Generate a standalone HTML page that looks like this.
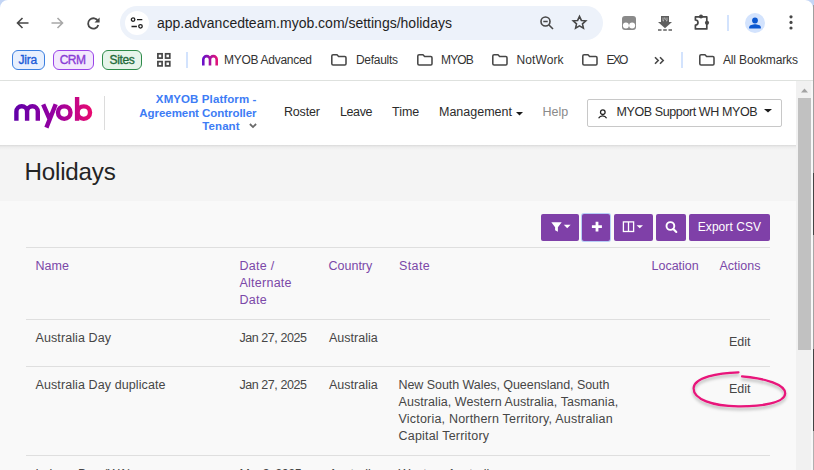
<!DOCTYPE html>
<html><head><meta charset="utf-8">
<style>
*{box-sizing:border-box;margin:0;padding:0}
html,body{width:814px;height:470px;overflow:hidden;background:#fff;font-family:"Liberation Sans",sans-serif}
.a{position:absolute;white-space:nowrap;line-height:1}
svg{position:absolute;overflow:visible}
#chrome{position:absolute;left:0;top:0;width:814px;height:80px;background:#fff}
#url{position:absolute;left:120px;top:6px;width:483px;height:34px;border-radius:17px;background:#edf2fa}
.pill{position:absolute;top:50px;height:20px;border-radius:6px;border:1.5px solid;font-size:12px;line-height:18px;text-align:center;-webkit-text-stroke:0.35px}
.bm{font-size:12px;color:#333;top:54.3px}
#sep{position:absolute;left:0;top:80px;width:813px;height:1px;background:#e0e3e0}
#hdr{position:absolute;left:0;top:81px;width:796px;height:64px;background:#fff;box-shadow:0 0.5px 1px rgba(0,0,0,.13),0 2px 4px rgba(0,0,0,.07)}
#titlebar{position:absolute;left:0;top:145px;width:796px;height:56px;background:#f4f4f4}
#content{position:absolute;left:0;top:201px;width:796px;height:269px;background:#f9f9f9}
.nav{font-size:12.5px;color:#2b2b2b;top:106.4px}
.ten{left:100px;width:156.5px;text-align:right;font-size:11.5px;font-weight:bold;color:#3d7cf5}
.btn{position:absolute;top:214px;height:27px;background:#7f40a8;border-radius:2px}
.th{font-size:12.5px;color:#7b48a8;line-height:17px}
.td{font-size:12.5px;color:#464646;line-height:17px}
.hl{position:absolute;left:26px;width:744px;height:1px;background:#dfdfdf}
</style></head><body>
<div id="chrome"></div>
<!-- window corners -->
<svg style="left:0;top:0" width="8" height="8"><path d="M0 0H8A8 8 0 0 0 0 8Z" fill="#c3d5f5"/></svg>
<svg style="left:805px;top:0" width="9" height="9"><path d="M0 0H9V9H8A8 8 0 0 0 0 0Z" fill="#c3d5f5"/></svg>
<!-- nav icons -->
<svg style="left:15.8px;top:17px" width="13" height="12" viewBox="0 0 13 12"><path d="M12.5 6H1.5M6.5 1L1.5 6L6.5 11" fill="none" stroke="#474747" stroke-width="1.6"/></svg>
<svg style="left:51px;top:17px" width="13" height="12" viewBox="0 0 13 12"><path d="M0.5 6H11.5M6.5 1L11.5 6L6.5 11" fill="none" stroke="#a8a8a8" stroke-width="1.6"/></svg>
<svg style="left:87.1px;top:17px" width="13" height="12" viewBox="0 0 13 12"><path d="M11 4.2A5.2 5.2 0 1 0 11.3 8" fill="none" stroke="#474747" stroke-width="1.8"/><path d="M12.6 0.5V5.6H7.5Z" fill="#474747"/></svg>
<div id="url"></div>
<div style="position:absolute;left:124.8px;top:10.9px;width:24px;height:24px;border-radius:50%;background:#fff"></div>
<svg style="left:130px;top:17px" width="13" height="12" viewBox="0 0 13 12"><circle cx="3.1" cy="2.6" r="1.75" fill="none" stroke="#1f1f1f" stroke-width="1.3"/><path d="M7 2.6H12.3M1.5 9.5H6.9" stroke="#1f1f1f" stroke-width="1.3"/><circle cx="10.5" cy="9.3" r="1.75" fill="none" stroke="#1f1f1f" stroke-width="1.3"/></svg>
<div class="a" style="left:157px;top:15.7px;font-size:14px;color:#1f1f1f">app.advancedteam.myob.com/settings/holidays</div>
<svg style="left:540px;top:16px" width="14" height="14" viewBox="0 0 14 14"><circle cx="5.5" cy="5.5" r="4.5" fill="none" stroke="#474747" stroke-width="1.6"/><path d="M3.3 5.5H7.7M9 9L13 13" stroke="#474747" stroke-width="1.6"/></svg>
<svg style="left:570.5px;top:14.2px" width="17" height="17" viewBox="0 0 24 24"><path d="M12 3.3l2.65 5.75 6.25.6-4.7 4.2 1.35 6.15-5.55-3.2-5.55 3.2 1.35-6.15-4.7-4.2 6.25-.6z" fill="none" stroke="#474747" stroke-width="2.2" stroke-linejoin="miter" stroke-miterlimit="3"/></svg>
<!-- extensions -->
<svg style="left:622px;top:16px" width="14" height="14" viewBox="0 0 14 14"><rect x="0" y="0" width="14" height="14" rx="3" fill="#8a8a8a"/><circle cx="3.9" cy="9.6" r="3" fill="#fff"/><circle cx="10.1" cy="9.6" r="3" fill="#fff"/></svg>
<svg style="left:658px;top:16px" width="14" height="15" viewBox="0 0 14 15"><rect x="3" y="0" width="8" height="6.2" fill="#5f5f5f"/><path d="M0 6H14L7 12.3Z" fill="#5f5f5f"/><path d="M0 13.9H3.5M5.2 13.9H8.8M10.5 13.9H14" stroke="#5f5f5f" stroke-width="1.5"/><path d="M5 1.5V4.8H6M9 1.5V4.8H8M6.8 1.3V3.2H8" stroke="#ddd" stroke-width=".7" fill="none"/></svg>
<svg style="left:690px;top:10px" width="26" height="24" viewBox="0 0 26 24"><path d="M5.4 6.9H16.8V18.9H5.4V15.2A2.6 2.6 0 0 0 5.4 10Z" fill="none" stroke="#474747" stroke-width="1.7" stroke-linejoin="round"/><circle cx="11" cy="6.6" r="2" fill="#474747"/><circle cx="17" cy="12.8" r="2.1" fill="#474747"/></svg>
<div style="position:absolute;left:727px;top:15px;width:2px;height:16px;background:#d3e3fd"></div>
<div style="position:absolute;left:745px;top:13px;width:20px;height:20px;border-radius:50%;background:#d3e3fd"></div>
<svg style="left:745px;top:13px" width="20" height="20" viewBox="0 0 20 20"><circle cx="10" cy="7.5" r="2.9" fill="#0b57d0"/><path d="M4.2 15.5V14.2C4.2 12.2 8 11.3 10 11.3S15.8 12.2 15.8 14.2V15.5Z" fill="#0b57d0"/></svg>
<svg style="left:789px;top:15px" width="4" height="15" viewBox="0 0 4 15"><circle cx="2" cy="1.8" r="1.6" fill="#474747"/><circle cx="2" cy="7.4" r="1.6" fill="#474747"/><circle cx="2" cy="13" r="1.6" fill="#474747"/></svg>
<!-- bookmarks bar -->
<div class="pill" style="left:12px;width:33px;border-color:#3b7fe0;background:#e8f0fe;color:#1a5bd8;letter-spacing:-0.25px;text-align:left;padding-left:5.5px">Jira</div>
<div class="pill" style="left:53px;width:41px;border-color:#9a44e8;background:#f3e8fd;color:#8a3bd6;letter-spacing:-0.6px;text-align:left;padding-left:5.8px">CRM</div>
<div class="pill" style="left:102px;width:40px;border-color:#2e8b4a;background:#e6f4ea;color:#1f6b3a;letter-spacing:-0.35px">Sites</div>
<svg style="left:157px;top:53px" width="14" height="14" viewBox="0 0 14 14"><rect x="0.9" y="0.8" width="4.2" height="4.3" fill="none" stroke="#474747" stroke-width="1.7"/><rect x="8.6" y="0.8" width="4.2" height="4.3" fill="none" stroke="#474747" stroke-width="1.7"/><rect x="0.9" y="8.6" width="4.2" height="4.3" fill="none" stroke="#474747" stroke-width="1.7"/><rect x="8.6" y="8.6" width="4.2" height="4.3" fill="none" stroke="#474747" stroke-width="1.7"/></svg>
<div style="position:absolute;left:186px;top:52px;width:2px;height:15.5px;background:#d3e3fd"></div>
<svg style="left:202px;top:54px" width="16" height="12" viewBox="0 0 16 12"><defs><linearGradient id="mg" x1="0" x2="1"><stop offset="0" stop-color="#6a10c8"/><stop offset="1" stop-color="#e0157a"/></linearGradient></defs><path d="M1.3 11.5V5.5A3.3 3.3 0 0 1 8 5.5V11.5M8 5.5A3.3 3.3 0 0 1 14.7 5.5V11.5" fill="none" stroke="url(#mg)" stroke-width="2.6"/></svg>
<div class="a bm" style="left:224px;letter-spacing:-0.28px">MYOB Advanced</div>
<svg style="left:331px;top:54px" width="17" height="12" viewBox="0 0 17 12"><path d="M0.8 2.1Q0.8 0.8 2.1 0.8H6L7.6 2.5H13.8Q15 2.5 15 3.7V9.8Q15 11 13.8 11H2.1Q0.8 11 0.8 9.8Z" fill="none" stroke="#474747" stroke-width="1.55" stroke-linejoin="round"/></svg>
<div class="a bm" style="left:356px;letter-spacing:-0.3px">Defaults</div>
<svg style="left:417px;top:54px" width="17" height="12" viewBox="0 0 17 12"><path d="M0.8 2.1Q0.8 0.8 2.1 0.8H6L7.6 2.5H13.8Q15 2.5 15 3.7V9.8Q15 11 13.8 11H2.1Q0.8 11 0.8 9.8Z" fill="none" stroke="#474747" stroke-width="1.55" stroke-linejoin="round"/></svg>
<div class="a bm" style="left:441px;letter-spacing:-0.85px">MYOB</div>
<svg style="left:492px;top:54px" width="17" height="12" viewBox="0 0 17 12"><path d="M0.8 2.1Q0.8 0.8 2.1 0.8H6L7.6 2.5H13.8Q15 2.5 15 3.7V9.8Q15 11 13.8 11H2.1Q0.8 11 0.8 9.8Z" fill="none" stroke="#474747" stroke-width="1.55" stroke-linejoin="round"/></svg>
<div class="a bm" style="left:516.5px;letter-spacing:0.1px">NotWork</div>
<svg style="left:582px;top:54px" width="17" height="12" viewBox="0 0 17 12"><path d="M0.8 2.1Q0.8 0.8 2.1 0.8H6L7.6 2.5H13.8Q15 2.5 15 3.7V9.8Q15 11 13.8 11H2.1Q0.8 11 0.8 9.8Z" fill="none" stroke="#474747" stroke-width="1.55" stroke-linejoin="round"/></svg>
<div class="a bm" style="left:606.5px;letter-spacing:-1.7px">EXO</div>
<svg style="left:653.5px;top:55.5px" width="11" height="9" viewBox="0 0 11 8"><path d="M1 0.8L4.2 4L1 7.2M6 0.8L9.2 4L6 7.2" fill="none" stroke="#474747" stroke-width="1.6"/></svg>
<div style="position:absolute;left:681px;top:52px;width:2px;height:15.5px;background:#d3e3fd"></div>
<svg style="left:699px;top:54px" width="17" height="12" viewBox="0 0 17 12"><path d="M0.8 2.1Q0.8 0.8 2.1 0.8H6L7.6 2.5H13.8Q15 2.5 15 3.7V9.8Q15 11 13.8 11H2.1Q0.8 11 0.8 9.8Z" fill="none" stroke="#474747" stroke-width="1.55" stroke-linejoin="round"/></svg>
<div class="a bm" style="left:723px;letter-spacing:-0.15px">All Bookmarks</div>
<div id="sep"></div>

<!-- page -->
<div id="hdr"></div>
<div id="titlebar"></div>
<div id="content"></div>
<div style="position:absolute;left:0;top:145px;width:796px;height:5px;background:linear-gradient(#d9d9d9,#e6e6e6 1.2px,#eeeeee 2.4px,#f4f4f4 5px)"></div>
<!-- logo -->
<svg style="left:13px;top:96px" width="80" height="34" viewBox="0 0 80 34"><defs><linearGradient id="lg" x1="0" x2="80" gradientUnits="userSpaceOnUse"><stop offset="0" stop-color="#5f00a8"/><stop offset=".55" stop-color="#9a00a0"/><stop offset="1" stop-color="#ec0a6e"/></linearGradient></defs>
<g fill="none" stroke="url(#lg)" stroke-width="4.4" stroke-linecap="butt">
<path d="M3.4 24.8V15.6A5.35 5.35 0 0 1 14.1 15.6V24.8M14.1 15.6A5.35 5.35 0 0 1 24.8 15.6V24.8"/>
<path d="M30.2 8.3L36.6 23M42.7 8.3L33.4 31.6"/>
<circle cx="51.25" cy="16.6" r="6.25"/>
<path d="M64.1 1V24.8"/><circle cx="70.8" cy="16.6" r="6.25"/>
</g></svg>
<div style="position:absolute;left:104px;top:96px;width:1px;height:34px;background:#dcdcdc"></div>
<div class="a ten" style="top:93.5px;letter-spacing:0.1px">XMYOB Platform -</div>
<div class="a ten" style="top:107.7px;letter-spacing:-0.05px">Agreement Controller</div>
<div class="a ten" style="top:121px;width:139.7px;letter-spacing:0.1px">Tenant</div>
<svg style="left:248.5px;top:122.8px" width="8" height="6" viewBox="0 0 8 6"><path d="M0.9 1L4 4.1L7.1 1" fill="none" stroke="#6a6a6a" stroke-width="1.8"/></svg>
<div class="a nav" style="left:284px;letter-spacing:-0.2px">Roster</div>
<div class="a nav" style="left:340px;letter-spacing:-0.4px">Leave</div>
<div class="a nav" style="left:392px">Time</div>
<div class="a nav" style="left:439px;letter-spacing:0px">Management</div>
<svg style="left:516px;top:111.7px" width="7" height="4" viewBox="0 0 7 4"><path d="M0 0H7L3.5 3.4Z" fill="#1a1a1a"/></svg>
<div class="a nav" style="left:542.5px;color:#8a8a8a">Help</div>
<div style="position:absolute;left:587px;top:99px;width:195px;height:28px;border:1px solid #c8c8c8;border-radius:2px;background:#fff"></div>
<svg style="left:597px;top:108.5px" width="11" height="10" viewBox="0 0 11 10"><circle cx="5.8" cy="3.2" r="2.3" fill="none" stroke="#222" stroke-width="1.3"/><path d="M1.6 9.2A4.6 4.6 0 0 1 9.6 9.2" fill="none" stroke="#222" stroke-width="1.3"/></svg>
<div class="a nav" style="left:616.5px;top:106.4px;letter-spacing:-0.4px">MYOB Support WH MYOB</div>
<svg style="left:764px;top:108.8px" width="8" height="4" viewBox="0 0 8 4"><path d="M0 0H8L4 3.5Z" fill="#1a1a1a"/></svg>
<!-- scrollbar -->
<div style="position:absolute;left:796px;top:81px;width:16.5px;height:389px;background:#f1f1f1"></div>
<svg style="left:801px;top:87.5px" width="7" height="5" viewBox="0 0 7 5"><path d="M0 4.5H7L3.5 0.5Z" fill="#a3a3a3"/></svg>
<div style="position:absolute;left:798px;top:98px;width:12.5px;height:252px;background:#c1c1c1"></div>
<div style="position:absolute;left:810.5px;top:81px;width:2.5px;height:389px;background:#f8f8f8"></div>
<div style="position:absolute;left:813px;top:0;width:1px;height:470px;background:linear-gradient(#c3d5f5 0,#c3d5f5 5px,#a0a0a0 5px,#a0a0a0 173px,#444 173px,#444 235px,#a8a8a8 235px,#a0a0a0 349px,#444 349px,#444 431px,#b0b0b0 431px)"></div>

<!-- title -->
<div class="a" style="left:24.5px;top:159.5px;font-size:24.2px;color:#242424;letter-spacing:-0.2px">Holidays</div>

<!-- toolbar buttons -->
<div class="btn" style="left:541px;width:38px"></div>
<svg style="left:550.5px;top:222px" width="22" height="11" viewBox="0 0 22 11"><path d="M0.3 0.2H10.7L6.9 5.2V9.8L4.1 8.3V5.2Z" fill="#fff"/><path d="M12.8 2.8H19.6L16.2 6.2Z" fill="#fff"/></svg>
<div class="btn" style="left:582px;width:28px;box-shadow:0 0 0 1px #b6cdf8"></div>
<svg style="left:591px;top:220.5px" width="12" height="12" viewBox="0 0 12 12"><path d="M6 0.8V10.6M0.9 5.7H10.9" stroke="#fff" stroke-width="2.8"/></svg>
<div class="btn" style="left:614px;width:39px"></div>
<svg style="left:622px;top:221px" width="22" height="12" viewBox="0 0 22 12"><rect x="1.4" y="0.9" width="10.2" height="9.6" fill="none" stroke="#fff" stroke-width="1.3"/><path d="M6.5 0.9V10.5" stroke="#fff" stroke-width="1.3"/><path d="M14.6 4.2H21L17.8 7.3Z" fill="#fff"/></svg>
<div class="btn" style="left:656px;width:30px"></div>
<svg style="left:665px;top:221px" width="13" height="13" viewBox="0 0 13 13"><circle cx="5.4" cy="5" r="3.9" fill="none" stroke="#fff" stroke-width="1.9"/><path d="M8.3 8L11.3 11" stroke="#fff" stroke-width="2.1" stroke-linecap="round"/></svg>
<div class="btn" style="left:689px;width:81px"></div>
<div class="a" style="left:697.8px;top:220.8px;font-size:12px;color:#fff;letter-spacing:0.05px">Export CSV</div>

<!-- table -->
<div class="hl" style="top:247px"></div>
<div class="a th" style="left:35.5px;top:257.8px">Name</div>
<div class="a th" style="left:239.5px;top:257.8px;letter-spacing:0.25px">Date /<br>Alternate<br>Date</div>
<div class="a th" style="left:328.5px;top:257.8px">Country</div>
<div class="a th" style="left:399px;top:257.8px;letter-spacing:0.4px">State</div>
<div class="a th" style="left:651.5px;top:257.8px">Location</div>
<div class="a th" style="left:719.5px;top:257.8px">Actions</div>
<div class="hl" style="top:319px"></div>
<div class="a td" style="left:35.5px;top:330px;letter-spacing:0.1px">Australia Day</div>
<div class="a td" style="left:239.5px;top:330px;letter-spacing:-0.45px">Jan 27, 2025</div>
<div class="a td" style="left:329px;top:330px">Australia</div>
<div class="a td" style="left:729px;top:334px">Edit</div>
<div class="hl" style="top:366px"></div>
<div class="a td" style="left:35.5px;top:377px;letter-spacing:0.1px">Australia Day duplicate</div>
<div class="a td" style="left:239.5px;top:377px;letter-spacing:-0.45px">Jan 27, 2025</div>
<div class="a td" style="left:329px;top:377px">Australia</div>
<div class="a td" style="left:398.5px;top:377px;letter-spacing:-0.06px">New South Wales, Queensland, South</div>
<div class="a td" style="left:398.5px;top:394px;letter-spacing:0.07px">Australia, Western Australia, Tasmania,</div>
<div class="a td" style="left:398.5px;top:411px;letter-spacing:0.2px">Victoria, Northern Territory, Australian</div>
<div class="a td" style="left:398.5px;top:428px;letter-spacing:0.2px">Capital Territory</div>
<div class="a td" style="left:729px;top:381px">Edit</div>
<div class="hl" style="top:455px"></div>
<div class="a td" style="left:35.5px;top:465.8px">Labour Day (WA)</div>
<div class="a td" style="left:239.5px;top:465.8px;letter-spacing:-0.45px">Mar 3, 2025</div>
<div class="a td" style="left:329px;top:465.8px">Australia</div>
<div class="a td" style="left:398.5px;top:465.8px">Western Australia</div>
<!-- annotation ellipse -->
<svg style="left:680px;top:360px" width="120" height="60" viewBox="0 0 120 60"><defs><filter id="sh" x="-20%" y="-20%" width="140%" height="160%"><feDropShadow dx="0" dy="2.5" stdDeviation="1.6" flood-color="#000" flood-opacity=".28"/></filter></defs><path d="M62 16.4C86 18.5 105.5 24.5 105.2 33.5C104.8 42.5 83 46.6 58 46.3C33 46 13 39.5 13.6 28C14.2 17.5 38 12.8 58.5 12.3" fill="none" stroke="#e8137a" stroke-width="2.2" stroke-linecap="round" filter="url(#sh)"/></svg>
</body></html>
